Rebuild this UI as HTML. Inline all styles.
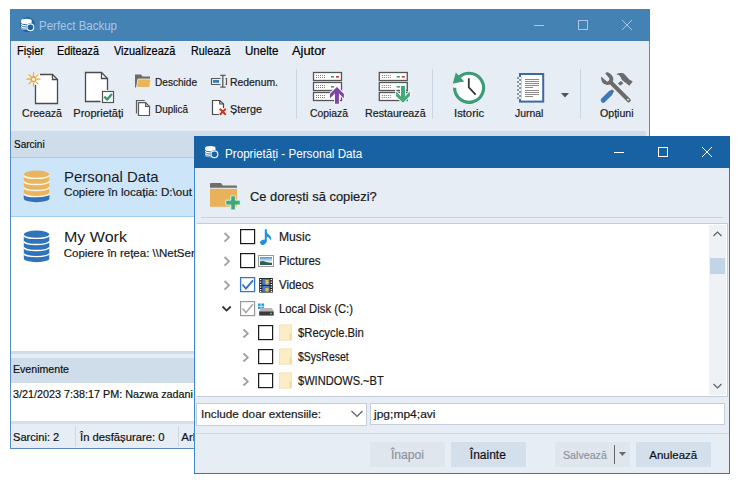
<!DOCTYPE html>
<html><head><meta charset="utf-8"><style>
html,body{margin:0;padding:0;background:#fff;width:743px;height:486px;overflow:hidden;position:relative;font-family:"Liberation Sans",sans-serif}
body>div,body>svg{position:absolute}
.t{position:absolute;white-space:nowrap;line-height:1;-webkit-text-stroke:0.2px currentColor}
.n{-webkit-text-stroke:0}
</style></head><body>
<div style="left:10px;top:9px;width:640px;height:440px;background:#e6edf5;"></div>
<div style="left:10px;top:9px;width:640px;height:32px;background:#4582b4;"></div>
<div style="left:10px;top:41px;width:1px;height:408px;background:#5a8ac0;"></div>
<div style="left:649px;top:41px;width:1px;height:408px;background:#5a8ac0;"></div>
<div style="left:10px;top:448px;width:640px;height:1px;background:#5a8ac0;"></div>
<div class="t n" style="left:38.7px;top:20.14px;font-size:12px;color:#a9c7e4;transform:scaleX(0.9585);transform-origin:0 0;">Perfect Backup</div>
<svg style="left:520px;top:9px" width="130" height="31"><g stroke="#a9c7e4" stroke-width="1" fill="none"><line x1="534" y1="25.5" x2="544" y2="25.5" transform="translate(-520,-9)"/><rect x="578.5" y="20.5" width="9" height="9" transform="translate(-520,-9)"/><path d="M622 20 L632 30 M632 20 L622 30" transform="translate(-520,-9)"/></g></svg>
<svg style="left:17px;top:14px" width="20" height="20" viewBox="0 0 20 20">
<circle cx="10.5" cy="10.7" r="7.4" fill="#1e62a2"/>
<g transform="translate(4.1,4.7)">
<path d="M0 2 A5.3 1.9 0 0 1 10.6 2 V9.5 A5.3 1.9 0 0 1 0 9.5 Z" fill="#fff"/>
<g fill="none" stroke="#1e62a2" stroke-width="0.9">
<path d="M0 4.3 A5.3 1.7 0 0 0 10.6 4.3"/><path d="M0 6.6 A5.3 1.7 0 0 0 10.6 6.6"/><path d="M0 8.9 A5.3 1.7 0 0 0 10.6 8.9"/>
</g>
<circle cx="9.3" cy="8.5" r="4.2" fill="#1e62a2"/>
<circle cx="9.3" cy="8.5" r="3.4" fill="#1e62a2" stroke="#e8f6ff" stroke-width="1.2"/>
</g></svg>
<div class="t" style="left:16.5px;top:44.54px;font-size:12px;color:#000;transform:scaleX(0.9205);transform-origin:0 0;">Fișier</div>
<div class="t" style="left:57.4px;top:44.54px;font-size:12px;color:#000;transform:scaleX(0.8994);transform-origin:0 0;">Editează</div>
<div class="t" style="left:114.4px;top:44.54px;font-size:12px;color:#000;transform:scaleX(0.9128);transform-origin:0 0;">Vizualizează</div>
<div class="t" style="left:190.5px;top:44.54px;font-size:12px;color:#000;transform:scaleX(0.8972);transform-origin:0 0;">Rulează</div>
<div class="t" style="left:244.7px;top:44.54px;font-size:12px;color:#000;transform:scaleX(0.9658);transform-origin:0 0;">Unelte</div>
<div class="t" style="left:292.0px;top:44.54px;font-size:12px;color:#000;transform:scaleX(1.0719);transform-origin:0 0;">Ajutor</div>
<div class="t" style="left:21.6px;top:108.09px;font-size:11px;color:#1a1a1a;transform:scaleX(0.9621);transform-origin:0 0;">Creează</div>
<div class="t" style="left:73.3px;top:108.09px;font-size:11px;color:#1a1a1a;">Proprietăți</div>
<div class="t" style="left:155.0px;top:76.89px;font-size:11px;color:#1a1a1a;transform:scaleX(0.9159);transform-origin:0 0;">Deschide</div>
<div class="t" style="left:230.4px;top:76.89px;font-size:11px;color:#1a1a1a;transform:scaleX(0.9458);transform-origin:0 0;">Redenum.</div>
<div class="t" style="left:155.0px;top:103.69px;font-size:11px;color:#1a1a1a;transform:scaleX(0.8996);transform-origin:0 0;">Duplică</div>
<div class="t" style="left:230.0px;top:103.69px;font-size:11px;color:#1a1a1a;transform:scaleX(0.9874);transform-origin:0 0;">Șterge</div>
<div class="t" style="left:309.8px;top:108.09px;font-size:11px;color:#1a1a1a;transform:scaleX(0.9416);transform-origin:0 0;">Copiază</div>
<div class="t" style="left:364.7px;top:108.09px;font-size:11px;color:#1a1a1a;transform:scaleX(0.9716);transform-origin:0 0;">Restaurează</div>
<div class="t" style="left:453.5px;top:108.09px;font-size:11px;color:#1a1a1a;transform:scaleX(1.0226);transform-origin:0 0;">Istoric</div>
<div class="t" style="left:514.9px;top:108.09px;font-size:11px;color:#1a1a1a;transform:scaleX(0.9446);transform-origin:0 0;">Jurnal</div>
<div class="t" style="left:599.7px;top:108.09px;font-size:11px;color:#1a1a1a;transform:scaleX(0.9640);transform-origin:0 0;">Opțiuni</div>
<div style="left:296px;top:69px;width:1px;height:50px;background:#c9d6e3;"></div>
<div style="left:432px;top:69px;width:1px;height:50px;background:#c9d6e3;"></div>
<div style="left:580px;top:69px;width:1px;height:50px;background:#c9d6e3;"></div>
<div style="left:11px;top:131px;width:635px;height:26px;background:#cfddeb;"></div>
<div class="t" style="left:13.6px;top:138.89px;font-size:11px;color:#111;transform:scaleX(0.9101);transform-origin:0 0;">Sarcini</div>
<div style="left:11px;top:157px;width:635px;height:194px;background:#ffffff;"></div>
<div style="left:11px;top:157px;width:635px;height:60px;background:#cde5f9;"></div>
<div style="left:11px;top:157px;width:635px;height:1px;background:#a3cdf0;"></div>
<div style="left:11px;top:216px;width:635px;height:1px;background:#a3cdf0;"></div>
<div class="t n" style="left:63.7px;top:168.80px;font-size:15px;color:#1a1a1a;transform:scaleX(0.9952);transform-origin:0 0;">Personal Data</div>
<div class="t" style="left:63.7px;top:187.07px;font-size:11.5px;color:#1a1a1a;transform:scaleX(1.0113);transform-origin:0 0;">Copiere în locația: D:\out</div>
<div class="t n" style="left:63.7px;top:229.30px;font-size:15px;color:#1a1a1a;transform:scaleX(1.0682);transform-origin:0 0;">My Work</div>
<div class="t" style="left:63.7px;top:247.57px;font-size:11.5px;color:#1a1a1a;">Copiere în rețea: \\NetServer</div>
<div style="left:11px;top:351px;width:635px;height:3px;background:#cfdce9;"></div>
<div style="left:11px;top:354px;width:635px;height:4px;background:#e6edf5;"></div>
<div style="left:11px;top:358px;width:635px;height:25px;background:#cfddeb;"></div>
<div class="t" style="left:13.2px;top:363.59px;font-size:11px;color:#111;transform:scaleX(0.9640);transform-origin:0 0;">Evenimente</div>
<div style="left:11px;top:383px;width:635px;height:38px;background:#ffffff;"></div>
<div class="t" style="left:12.5px;top:389.27px;font-size:11.5px;color:#111;transform:scaleX(0.9385);transform-origin:0 0;">3/21/2023 7:38:17 PM: Nazwa zadani</div>
<div style="left:11px;top:421px;width:638px;height:3px;background:#d3dfeb;"></div>
<div style="left:11px;top:424px;width:638px;height:24px;background:#e6edf5;"></div>
<div class="t" style="left:12.5px;top:431.57px;font-size:11.5px;color:#111;transform:scaleX(0.9658);transform-origin:0 0;">Sarcini: 2</div>
<div style="left:75px;top:426px;width:1px;height:21px;background:#cfd9e4;"></div>
<div class="t" style="left:79.8px;top:431.57px;font-size:11.5px;color:#111;transform:scaleX(0.9803);transform-origin:0 0;">În desfășurare: 0</div>
<div style="left:178px;top:426px;width:1px;height:21px;background:#cfd9e4;"></div>
<div class="t" style="left:181.3px;top:431.57px;font-size:11.5px;color:#111;">Arhivate: 0</div>
<svg style="left:0;top:0" width="743" height="486" viewBox="0 0 743 486">
<!-- Creeaza -->
<path d="M35.5 85 V103.5 H57.5 V79.5 L52.5 74.5 H40" fill="#fff" stroke="#4a4a4a" stroke-width="1.3"/>
<path d="M35.5 85 V74.5 H40" fill="#fff" stroke="none"/>
<path d="M52.5 74.5 V79.5 H57.5" fill="none" stroke="#4a4a4a" stroke-width="1.3"/>
<g stroke="#eaa93f" stroke-width="1.2" stroke-linecap="round">
<path d="M33.5 72.5 V75.5 M33.5 83 V86 M27 79.2 H30 M37 79.2 H40 M28.9 74.6 L30.9 76.6 M36.1 81.8 L38.1 83.8 M28.9 83.8 L30.9 81.8 M36.1 76.6 L38.1 74.6"/>
</g>
<circle cx="33.5" cy="79.2" r="2.3" fill="#fff" stroke="#eaa93f" stroke-width="1.6"/>
<!-- Proprietati -->
<path d="M100.5 101.5 H85.5 V72.5 H101.5 L107.5 78.5 V90" fill="#fff" stroke="#4a4a4a" stroke-width="1.3"/>
<path d="M101.5 72.5 V78.5 H107.5" fill="none" stroke="#4a4a4a" stroke-width="1.3"/>
<rect x="102.5" y="91.5" width="11" height="11" fill="#fff" stroke="#555" stroke-width="1.2"/>
<path d="M104.3 96.6 L107.2 99.5 L111.9 93.9" fill="none" stroke="#3a9a6c" stroke-width="2.4"/>
<!-- Deschide folder -->
<path d="M135 87.5 V74.5 H141 L142.5 76.5 H150 V79 H138 L136.5 87.5 Z" fill="#6a6a6a"/>
<path d="M138 79 H151 L149.6 87.5 H136.5 Z" fill="#e9b55a" stroke="#fdf3dc" stroke-width="0.8"/>
<!-- Redenum -->
<path d="M220.5 78.5 H211.5 V84.5 H220.5 M225.5 78.5 H226.5 V84.5 H225.5" fill="none" stroke="#5a5a5a" stroke-width="1.2"/>
<rect x="213" y="80" width="6" height="2.8" fill="#3d7ab8"/>
<path d="M222.8 75 V87.5 M220.3 75.3 H225.6 M220.3 87.2 H225.6" fill="none" stroke="#5a5a5a" stroke-width="1.3"/>
<!-- Duplica -->
<path d="M136.5 113.5 V100.5 H144.8" fill="none" stroke="#5a5a5a" stroke-width="1.2"/>
<path d="M138.5 115.5 V102.7 H145.6 L149.5 106.4 V115.5 Z" fill="#fff" stroke="#5a5a5a" stroke-width="1.2"/>
<path d="M145.6 102.7 V106.4 H149.5" fill="none" stroke="#5a5a5a" stroke-width="1.2"/>
<!-- Sterge -->
<path d="M219 114.5 H212.5 V100.5 H219.8 L223.5 104 V108" fill="#fff" stroke="#4a4a4a" stroke-width="1.2"/>
<path d="M219.8 100.5 V104 H223.5" fill="none" stroke="#4a4a4a" stroke-width="1.2"/>
<path d="M219.5 108.5 L226 115 M226 108.5 L219.5 115" stroke="#fff" stroke-width="3.6"/>
<path d="M219.8 108.8 L225.8 114.8 M225.8 108.8 L219.8 114.8" stroke="#c8381e" stroke-width="2.1"/>
<!-- server icons -->
<g id="srv">
<rect x="313.5" y="72.5" width="28" height="8" fill="#fff" stroke="#555" stroke-width="1.3"/>
<rect x="313.5" y="82.5" width="28" height="8" fill="#fff" stroke="#555" stroke-width="1.3"/>
<rect x="313.5" y="92.5" width="28" height="8" fill="#fff" stroke="#555" stroke-width="1.3"/>
<g fill="#777">
<path d="M316 75h1v1h-1zM318 75h1v1h-1zM320 75h1v1h-1zM322 75h1v1h-1zM324 75h1v1h-1zM316 77h1v1h-1zM318 77h1v1h-1zM320 77h1v1h-1zM322 77h1v1h-1zM324 77h1v1h-1z"/>
<path d="M316 85h1v1h-1zM318 85h1v1h-1zM320 85h1v1h-1zM322 85h1v1h-1zM324 85h1v1h-1zM316 87h1v1h-1zM318 87h1v1h-1zM320 87h1v1h-1zM322 87h1v1h-1zM324 87h1v1h-1z"/>
<path d="M316 95h1v1h-1zM318 95h1v1h-1zM320 95h1v1h-1zM322 95h1v1h-1zM324 95h1v1h-1zM316 97h1v1h-1zM318 97h1v1h-1zM320 97h1v1h-1zM322 97h1v1h-1zM324 97h1v1h-1z"/>
</g>
<rect x="331" y="76" width="3" height="1.6" fill="#3c9a70"/>
<rect x="336" y="76" width="3" height="1.6" fill="#c0402a"/>
<rect x="331" y="86" width="3" height="1.6" fill="#3c9a70"/>
</g>
<path d="M336.9 86.9 L343.9 93.9 V98.2 L338.9 93.2 V103.7 H335 V93.2 L330 98.2 V93.9 Z" fill="#7d43a8" stroke="#f4f0fa" stroke-width="2" paint-order="stroke" stroke-linejoin="miter"/>
<use href="#srv" transform="translate(65.8,0)"/>
<path d="M403 102.8 L409.9 95.9 V91.6 L405 96.5 V86.1 H401 V96.5 L396.1 91.6 V95.9 Z" fill="#45a87c" stroke="#f0faf5" stroke-width="2" paint-order="stroke" stroke-linejoin="miter"/>
<!-- Istoric -->
<circle cx="469.1" cy="87.8" r="14.5" fill="#fff"/>
<path d="M454.6 87.8 A14.5 14.5 0 1 0 459.4 77" fill="none" stroke="#3d9c74" stroke-width="3.2"/>
<path d="M455.8 72.6 L452.8 83.6 L464.2 81.6 Z" fill="#3d9c74"/>
<path d="M468.8 78.3 V87.3 L475.7 94.7" fill="none" stroke="#3a3a3a" stroke-width="1.8"/>
<!-- Jurnal -->
<rect x="520" y="74" width="23.2" height="27.6" fill="#fff" stroke="#3c6aa0" stroke-width="2"/>
<g><rect x="517" y="77" width="2" height="2" fill="#8a96a3"/><rect x="519" y="77" width="2" height="2" fill="#eef3f8"/><rect x="519" y="79" width="2" height="2" fill="#8a96a3"/><rect x="517" y="79" width="2" height="2" fill="#eef3f8"/><rect x="517" y="81" width="2" height="2" fill="#8a96a3"/><rect x="519" y="81" width="2" height="2" fill="#eef3f8"/><rect x="519" y="83" width="2" height="2" fill="#8a96a3"/><rect x="517" y="83" width="2" height="2" fill="#eef3f8"/><rect x="517" y="85" width="2" height="2" fill="#8a96a3"/><rect x="519" y="85" width="2" height="2" fill="#eef3f8"/><rect x="519" y="87" width="2" height="2" fill="#8a96a3"/><rect x="517" y="87" width="2" height="2" fill="#eef3f8"/><rect x="517" y="89" width="2" height="2" fill="#8a96a3"/><rect x="519" y="89" width="2" height="2" fill="#eef3f8"/><rect x="519" y="91" width="2" height="2" fill="#8a96a3"/><rect x="517" y="91" width="2" height="2" fill="#eef3f8"/><rect x="517" y="93" width="2" height="2" fill="#8a96a3"/><rect x="519" y="93" width="2" height="2" fill="#eef3f8"/><rect x="519" y="95" width="2" height="2" fill="#8a96a3"/><rect x="517" y="95" width="2" height="2" fill="#eef3f8"/><rect x="517" y="97" width="2" height="2" fill="#8a96a3"/><rect x="519" y="97" width="2" height="2" fill="#eef3f8"/><rect x="521" y="77" width="0.8" height="22" fill="#b5c4d4"/></g>
<g fill="#8a8a8a">
<rect x="525" y="79" width="14" height="1"/><rect x="525" y="81" width="14" height="1"/><rect x="525" y="83" width="14" height="1"/><rect x="525" y="85" width="14" height="1"/><rect x="525" y="87" width="8" height="1"/>
<rect x="525" y="90" width="14" height="1"/><rect x="525" y="92" width="14" height="1"/><rect x="525" y="94" width="14" height="1"/><rect x="525" y="96" width="8" height="1"/>
</g>
<path d="M561 93 H569 L565 97.5 Z" fill="#555"/>
<!-- Optiuni -->
<path d="M603.2 100.3 L610.3 93.2" stroke="#3a78c0" stroke-width="5" stroke-linecap="round"/>
<path d="M611.3 92.2 L613.2 90.3" stroke="#6b6b6b" stroke-width="3.2"/>
<path d="M617.9 83.3 L621.1 81.1 L623.4 83.3 L620.1 85.8 Z" fill="#6b6b6b"/>
<path d="M616.2 74.2 Q619 72.6 621.9 73.1 Q623.5 73.3 624.3 74 L629.3 79.4 L632.7 81.6 L629.3 85.8 L626.3 83.3 L624.8 82.3 Q622 80.5 621.4 79.1 Q621 77 619.4 75.4 Q618 74.6 616.2 74.2 Z" fill="#6b6b6b"/>
<path d="M601 76.4 L606.9 81.6 Q608.8 82 609.6 78.8 L605.2 73.2 Q606.5 72 607.9 72.2 Q611.5 73.5 613.2 77.5 Q613.6 80 612.8 81.4 L630.3 98.9 A2.1 2.1 0 0 1 627 101.5 L610 84.5 Q606.3 85.8 603.5 83.6 Q601 81.5 601 76.4 Z" fill="#6b6b6b"/>
<circle cx="628" cy="99.6" r="0.9" fill="#fff"/>
<!-- DB icons -->
<path d="M23.8 174.8 A12.75 4.2 0 0 1 49.3 174.8 V198.5 A12.75 3.7 0 0 1 23.8 198.5 Z" fill="#e8b660"/>
<path d="M23.8 193.5 A12.75 3.2 0 0 0 49.3 193.5 V198.5 A12.75 3.7 0 0 1 23.8 198.5 Z" fill="#2f73bb"/>
<g fill="none" stroke="#fff6e6" stroke-width="1.4">
<path d="M23.8 175.2 A12.75 3.2 0 0 0 49.3 175.2"/>
<path d="M23.8 181.3 A12.75 3.2 0 0 0 49.3 181.3"/>
<path d="M23.8 187.3 A12.75 3.2 0 0 0 49.3 187.3"/>
<path d="M23.8 193.4 A12.75 3.2 0 0 0 49.3 193.4"/>
</g>
<g transform="translate(0,60)">
<path d="M23.8 174.8 A12.75 4.2 0 0 1 49.3 174.8 V198.5 A12.75 3.7 0 0 1 23.8 198.5 Z" fill="#2f73bb"/>
<g fill="none" stroke="#ffffff" stroke-width="1.4">
<path d="M23.8 175.2 A12.75 3.2 0 0 0 49.3 175.2"/>
<path d="M23.8 181.3 A12.75 3.2 0 0 0 49.3 181.3"/>
<path d="M23.8 187.3 A12.75 3.2 0 0 0 49.3 187.3"/>
<path d="M23.8 193.4 A12.75 3.2 0 0 0 49.3 193.4"/>
</g>
</g>
</svg>

<div style="left:194px;top:136px;width:536px;height:338px;background:#e6edf5;"></div>
<div style="left:194px;top:136px;width:536px;height:32px;background:#1862a4;"></div>
<div style="left:194px;top:168px;width:1px;height:306px;background:#4188c8;"></div>
<div style="left:729px;top:168px;width:1px;height:306px;background:#3d72aa;"></div>
<div style="left:194px;top:473px;width:536px;height:1px;background:#3d72aa;"></div>
<div class="t n" style="left:225.3px;top:147.84px;font-size:12px;color:#ffffff;transform:scaleX(0.9710);transform-origin:0 0;">Proprietăți - Personal Data</div>
<svg style="left:600px;top:136px" width="130" height="31"><g stroke="#fff" stroke-width="1" fill="none" transform="translate(-600,-136)"><line x1="614" y1="152.5" x2="624" y2="152.5"/><rect x="658.5" y="147.5" width="9" height="9"/><path d="M702 147 L712 157 M712 147 L702 157"/></g></svg>
<svg style="left:202px;top:142px" width="20" height="20" viewBox="0 0 20 20">
<g transform="translate(3.1,3.8)">
<path d="M0 2 A5.2 1.9 0 0 1 10.4 2 V9.5 A5.2 1.9 0 0 1 0 9.5 Z" fill="#fff"/>
<g fill="none" stroke="#1862a4" stroke-width="0.9">
<path d="M0 4.3 A5.2 1.7 0 0 0 10.4 4.3"/><path d="M0 6.6 A5.2 1.7 0 0 0 10.4 6.6"/><path d="M0 8.9 A5.2 1.7 0 0 0 10.4 8.9"/>
</g>
<circle cx="9.3" cy="8.5" r="4.2" fill="#1862a4"/>
<circle cx="9.3" cy="8.5" r="3.4" fill="#1862a4" stroke="#e8f6ff" stroke-width="1.2"/>
</g></svg>
<div class="t" style="left:250.3px;top:189.90px;font-size:13px;color:#1a1a1a;transform:scaleX(0.9906);transform-origin:0 0;">Ce dorești să copiezi?</div>
<div style="left:201px;top:217px;width:522px;height:1px;background:#c9d4df;"></div>
<div style="left:196px;top:223px;width:532px;height:174px;background:#ffffff;box-sizing:border-box;border:1px solid #c5ced8;border-left-color:#fff"></div>
<div style="left:709px;top:225px;width:17px;height:170px;background:#eef1f5;"></div>
<div style="left:710px;top:258px;width:15px;height:16px;background:#c2d5e7;"></div>
<div style="left:196px;top:403px;width:171px;height:23px;background:#fff;box-sizing:border-box;border:1px solid #c5ced8"></div>
<div class="t" style="left:201.3px;top:408.57px;font-size:11.5px;color:#1a1a1a;transform:scaleX(1.0202);transform-origin:0 0;">Include doar extensiile:</div>
<div style="left:370px;top:403px;width:355px;height:22px;background:#fff;box-sizing:border-box;border:1px solid #c5ced8"></div>
<div class="t" style="left:373.5px;top:408.57px;font-size:11.5px;color:#1a1a1a;transform:scaleX(1.0458);transform-origin:0 0;">jpg;mp4;avi</div>
<div style="left:195px;top:433px;width:534px;height:1px;background:#cfd9e4;"></div>
<div style="left:370px;top:442px;width:75px;height:25px;background:#dfe6ee;"></div>
<div class="t" style="left:391.0px;top:449.34px;font-size:12px;color:#8c959e;transform:scaleX(1.0093);transform-origin:0 0;">Înapoi</div>
<div style="left:451px;top:442px;width:75px;height:25px;background:#d3dfeb;"></div>
<div class="t" style="left:469.8px;top:449.34px;font-size:12px;color:#111;">Înainte</div>
<div style="left:555px;top:442px;width:75px;height:25px;background:#dfe6ee;"></div>
<div class="t" style="left:563.2px;top:449.77px;font-size:11.5px;color:#8c959e;transform:scaleX(0.9258);transform-origin:0 0;">Salvează</div>
<div style="left:614px;top:445px;width:1px;height:19px;background:#666;"></div>
<div style="left:636px;top:442px;width:75px;height:25px;background:#d3dfeb;"></div>
<div class="t" style="left:649.3px;top:449.77px;font-size:11.5px;color:#111;">Anulează</div>
<svg style="left:0;top:0" width="743" height="486" viewBox="0 0 743 486">
<!-- header folder -->
<path d="M210 187.7 V184 Q210 183 211 183 H221 L222.8 185.5 H236 Q237 185.5 237 186.5 V187.7 Z" fill="#6e6e6e"/>
<rect x="210" y="188.8" width="27" height="18" fill="#e8b15a"/>
<path d="M230.8 195.8 H235.4 V200.2 H240.2 V205 H235.4 V209.9 H230.8 V205 H225.8 V200.2 H230.8 Z" fill="#44a67e" stroke="#e6fff2" stroke-width="0.8"/>
<!-- scrollbar arrows -->
<path d="M713.5 236 L717.5 232 L721.5 236" fill="none" stroke="#606060" stroke-width="1.2"/>
<path d="M713.5 384 L717.5 388 L721.5 384" fill="none" stroke="#606060" stroke-width="1.2"/>
<!-- combo chevron -->
<path d="M351.5 411 L357 416.5 L362.5 411" fill="none" stroke="#606060" stroke-width="1.2"/>
<!-- salveaza arrow -->
<path d="M618.9 452 H626 L622.45 456 Z" fill="#6a6a6a"/>
<!-- tree chevrons -->
<g fill="none" stroke="#a0a0a0" stroke-width="1.8">
<path d="M224.5 233 L229 237.3 L224.5 241.6"/>
<path d="M224.5 257 L229 261.3 L224.5 265.6"/>
<path d="M224.5 281 L229 285.3 L224.5 289.6"/>
<path d="M243.5 329.5 L247.8 333.5 L243.5 337.5"/>
<path d="M243.5 353.5 L247.8 357.5 L243.5 361.5"/>
<path d="M243.5 377.5 L247.8 381.5 L243.5 385.5"/>
</g>
<path d="M222.5 306.5 L226.6 310.6 L230.7 306.5" fill="none" stroke="#333" stroke-width="1.8"/>
<!-- checkboxes -->
<g fill="#fff" stroke="#1a1a1a" stroke-width="1.2">
<rect x="240.6" y="229.6" width="14" height="14"/>
<rect x="240.6" y="253.6" width="14" height="14"/>
<rect x="258.6" y="325.6" width="14" height="14"/>
<rect x="258.6" y="349.6" width="14" height="14"/>
<rect x="258.6" y="373.6" width="14" height="14"/>
</g>
<rect x="240.6" y="277.6" width="14" height="14" fill="#fff" stroke="#3a78c5" stroke-width="1.3"/>
<path d="M242.5 284.5 L245.9 288.5 L253 280.3" fill="none" stroke="#2f6fc0" stroke-width="1.8"/>
<rect x="240.6" y="301.6" width="14" height="14" fill="#fff" stroke="#999" stroke-width="1.2"/>
<path d="M242.5 308.5 L245.9 312.5 L253 304.3" fill="none" stroke="#a8a8a8" stroke-width="1.5"/>
<!-- music note -->
<path d="M265.8 229.2 V242" stroke="#1e90e0" stroke-width="2"/>
<ellipse cx="263.2" cy="242.2" rx="3.2" ry="2.4" transform="rotate(-25 263.2 242.2)" fill="#1e90e0"/>
<path d="M265 229.2 Q266.5 233 269.5 235.2 Q272.2 237.5 270.6 240.6 Q270.2 238 266.5 236.5 Z" fill="#1e90e0"/>
<!-- picture -->
<rect x="258.5" y="255.5" width="15" height="11" fill="#fff" stroke="#9a9a9a" stroke-width="1"/>
<defs><linearGradient id="sky" x1="0" y1="0" x2="0" y2="1"><stop offset="0" stop-color="#4f93d0"/><stop offset="0.55" stop-color="#e4eff5"/><stop offset="1" stop-color="#e4eff5"/></linearGradient></defs>
<rect x="260" y="257" width="12" height="8" fill="url(#sky)"/>
<path d="M260 261.5 Q263 260.5 266 262 Q269 263 272 262.8 V265 H260 Z" fill="#2f5f55"/>
<!-- film -->
<rect x="259.2" y="278" width="13.6" height="14.6" fill="#1a1a1a"/>
<g fill="#fff">
<rect x="260" y="279" width="1.4" height="1.2"/><rect x="260" y="281.5" width="1.4" height="1.2"/><rect x="260" y="284" width="1.4" height="1.2"/><rect x="260" y="286.5" width="1.4" height="1.2"/><rect x="260" y="289" width="1.4" height="1.2"/><rect x="260" y="291" width="1.4" height="1"/>
<rect x="270.6" y="279" width="1.4" height="1.2"/><rect x="270.6" y="281.5" width="1.4" height="1.2"/><rect x="270.6" y="284" width="1.4" height="1.2"/><rect x="270.6" y="286.5" width="1.4" height="1.2"/><rect x="270.6" y="289" width="1.4" height="1.2"/><rect x="270.6" y="291" width="1.4" height="1"/>
</g>
<rect x="262.3" y="278.8" width="7.4" height="6" fill="#4a7ad0"/>
<rect x="265.5" y="280" width="3" height="4.5" fill="#e8c030"/>
<rect x="262.3" y="285.8" width="7.4" height="6" fill="#4a7ad0"/>
<rect x="265.5" y="288" width="3" height="3.5" fill="#e8c030"/>
<!-- local disk -->
<g fill="#1aa0e8">
<rect x="258" y="303.5" width="2.6" height="2.4"/><rect x="261.3" y="303.5" width="2.8" height="2.4"/>
<rect x="258" y="306.6" width="2.6" height="2.4"/><rect x="261.3" y="306.6" width="2.8" height="2.4"/>
</g>
<path d="M261 308 H272 L273.6 311 V315.5 H259.2 V311 Z" fill="#b8b8b8"/>
<rect x="259.2" y="311.5" width="14.4" height="4" fill="#3a3a3a"/>
<rect x="270" y="312.8" width="2" height="1.4" fill="#40d060"/>
<!-- light folders -->
<g fill="#fcedc4" stroke="#f3dea6" stroke-width="0.8">
<rect x="279.4" y="324.9" width="12.2" height="15.2"/>
<rect x="279.4" y="348.9" width="12.2" height="15.2"/>
<rect x="279.4" y="372.9" width="12.2" height="15.2"/>
</g>
<g fill="#f5dc9c">
<rect x="289.5" y="333.5" width="2" height="6.6"/>
<rect x="289.5" y="357.5" width="2" height="6.6"/>
<rect x="289.5" y="381.5" width="2" height="6.6"/>
</g>
</svg>

<div class="t" style="left:279.0px;top:230.54px;font-size:12px;color:#1a1a1a;transform:scaleX(1.0116);transform-origin:0 0;">Music</div>
<div class="t" style="left:279.0px;top:254.54px;font-size:12px;color:#1a1a1a;transform:scaleX(0.9597);transform-origin:0 0;">Pictures</div>
<div class="t" style="left:279.0px;top:278.54px;font-size:12px;color:#1a1a1a;transform:scaleX(0.9513);transform-origin:0 0;">Videos</div>
<div class="t" style="left:279.0px;top:302.54px;font-size:12px;color:#1a1a1a;transform:scaleX(0.9405);transform-origin:0 0;">Local Disk (C:)</div>
<div class="t" style="left:298.0px;top:326.54px;font-size:12px;color:#1a1a1a;transform:scaleX(0.9410);transform-origin:0 0;">$Recycle.Bin</div>
<div class="t" style="left:298.0px;top:350.54px;font-size:12px;color:#1a1a1a;transform:scaleX(0.8738);transform-origin:0 0;">$SysReset</div>
<div class="t" style="left:298.0px;top:374.54px;font-size:12px;color:#1a1a1a;transform:scaleX(0.9214);transform-origin:0 0;">$WINDOWS.~BT</div>
</body></html>
